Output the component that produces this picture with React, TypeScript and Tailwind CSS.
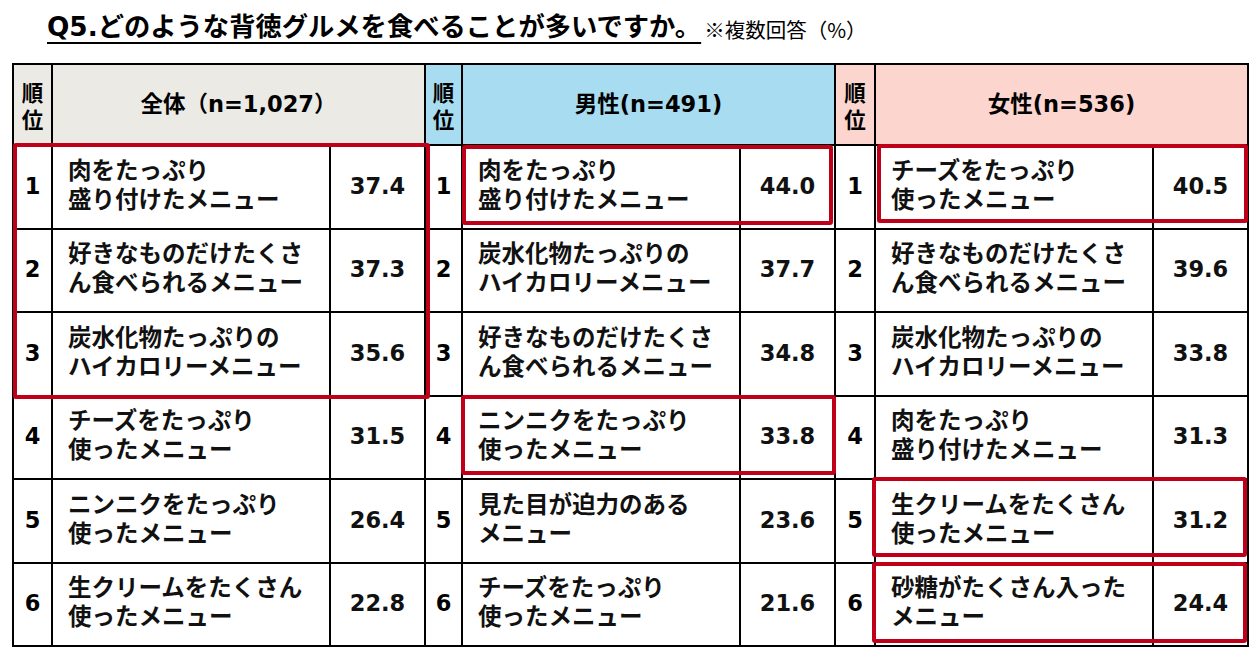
import React from "react";

type Row = { rank: number; l1: string; l2: string; v: string };

const all: Row[] = [
  { rank: 1, l1: "肉をたっぷり", l2: "盛り付けたメニュー", v: "37.4" },
  { rank: 2, l1: "好きなものだけたくさ", l2: "ん食べられるメニュー", v: "37.3" },
  { rank: 3, l1: "炭水化物たっぷりの", l2: "ハイカロリーメニュー", v: "35.6" },
  { rank: 4, l1: "チーズをたっぷり", l2: "使ったメニュー", v: "31.5" },
  { rank: 5, l1: "ニンニクをたっぷり", l2: "使ったメニュー", v: "26.4" },
  { rank: 6, l1: "生クリームをたくさん", l2: "使ったメニュー", v: "22.8" },
];
const male: Row[] = [
  { rank: 1, l1: "肉をたっぷり", l2: "盛り付けたメニュー", v: "44.0" },
  { rank: 2, l1: "炭水化物たっぷりの", l2: "ハイカロリーメニュー", v: "37.7" },
  { rank: 3, l1: "好きなものだけたくさ", l2: "ん食べられるメニュー", v: "34.8" },
  { rank: 4, l1: "ニンニクをたっぷり", l2: "使ったメニュー", v: "33.8" },
  { rank: 5, l1: "見た目が迫力のある", l2: "メニュー", v: "23.6" },
  { rank: 6, l1: "チーズをたっぷり", l2: "使ったメニュー", v: "21.6" },
];
const female: Row[] = [
  { rank: 1, l1: "チーズをたっぷり", l2: "使ったメニュー", v: "40.5" },
  { rank: 2, l1: "好きなものだけたくさ", l2: "ん食べられるメニュー", v: "39.6" },
  { rank: 3, l1: "炭水化物たっぷりの", l2: "ハイカロリーメニュー", v: "33.8" },
  { rank: 4, l1: "肉をたっぷり", l2: "盛り付けたメニュー", v: "31.3" },
  { rank: 5, l1: "生クリームをたくさん", l2: "使ったメニュー", v: "31.2" },
  { rank: 6, l1: "砂糖がたくさん入った", l2: "メニュー", v: "24.4" },
];

const font = { fontFamily: '"DejaVu Sans", "Noto Sans CJK JP", sans-serif' };
const jp = { fontFamily: '"Noto Sans CJK JP", sans-serif' };

function RankHead({ bg }: { bg: string }) {
  return (
    <div className={`${bg} flex flex-col items-center justify-center text-[21.5px] leading-[27px] font-bold`} style={jp}>
      <div>順</div>
      <div>位</div>
    </div>
  );
}

export default function App() {
  const cells: React.ReactNode[] = [];
  for (let i = 0; i < 6; i++) {
    [all[i], male[i], female[i]].forEach((r, k) => {
      cells.push(
        <div key={`r${i}-${k}`} className="bg-white flex items-center justify-center text-[22.5px] font-bold" style={font}>
          {r.rank}
        </div>
      );
      cells.push(
        <div key={`n${i}-${k}`} className="bg-white flex flex-col justify-center pl-[15px] pb-[6px] text-[23.5px] leading-[29px] font-bold text-[#111]" style={jp}>
          <div>{r.l1}</div>
          <div>{r.l2}</div>
        </div>
      );
      cells.push(
        <div key={`v${i}-${k}`} className="bg-white flex items-center justify-center text-[22.5px] font-bold text-[#111]" style={font}>
          {r.v}
        </div>
      );
    });
  }

  return (
    <div className="relative w-[1257px] h-[664px] bg-white text-black overflow-hidden">
      <div className="h-[63px] pl-[47px] pt-[11px] flex items-start">
        <span className="text-[26.3px] leading-[32px] font-bold underline underline-offset-[6px] decoration-[1.5px]" style={font}>
          Q5.どのような背徳グルメを食べることが多いですか。
        </span>
        <span className="ml-[3px] mt-[4px] text-[20.5px] leading-[28px]" style={jp}>
          ※複数回答（%）
        </span>
      </div>
      <div
        className="ml-[12px] w-[1237px] h-[584px] bg-black p-[2px] grid gap-[2px] grid-cols-[37px_276px_93px_35px_276px_93px_38px_276px_93px] grid-rows-[79px_repeat(6,1fr)]"
      >
        <RankHead bg="bg-[#ECEAE5]" />
        <div className="col-span-2 bg-[#ECEAE5] flex items-center justify-center text-[22.5px] font-bold" style={font}>
          全体（n=1,027）
        </div>
        <RankHead bg="bg-[#A8DDF1]" />
        <div className="col-span-2 bg-[#A8DDF1] flex items-center justify-center text-[22.5px] font-bold" style={font}>
          男性(n=491)
        </div>
        <RankHead bg="bg-[#FDD5CF]" />
        <div className="col-span-2 bg-[#FDD5CF] flex items-center justify-center text-[22.5px] font-bold" style={font}>
          女性(n=536)
        </div>
        {cells}
      </div>

      <div className="absolute left-[13px] top-[143px] w-[417px] h-[256px] border-[4px] border-[#C00018] rounded-[3px]" />
      <div className="absolute left-[462px] top-[145px] w-[371px] h-[80px] border-[4px] border-[#C00018] rounded-[3px]" />
      <div className="absolute left-[461px] top-[395px] w-[375px] h-[80px] border-[4px] border-[#C00018] rounded-[3px]" />
      <div className="absolute left-[877px] top-[144px] w-[371px] h-[79px] border-[4px] border-[#C00018] rounded-[3px]" />
      <div className="absolute left-[872px] top-[477px] w-[375px] h-[80px] border-[4px] border-[#C00018] rounded-[3px]" />
      <div className="absolute left-[872px] top-[562px] w-[375px] h-[81px] border-[4px] border-[#C00018] rounded-[3px]" />
    </div>
  );
}
